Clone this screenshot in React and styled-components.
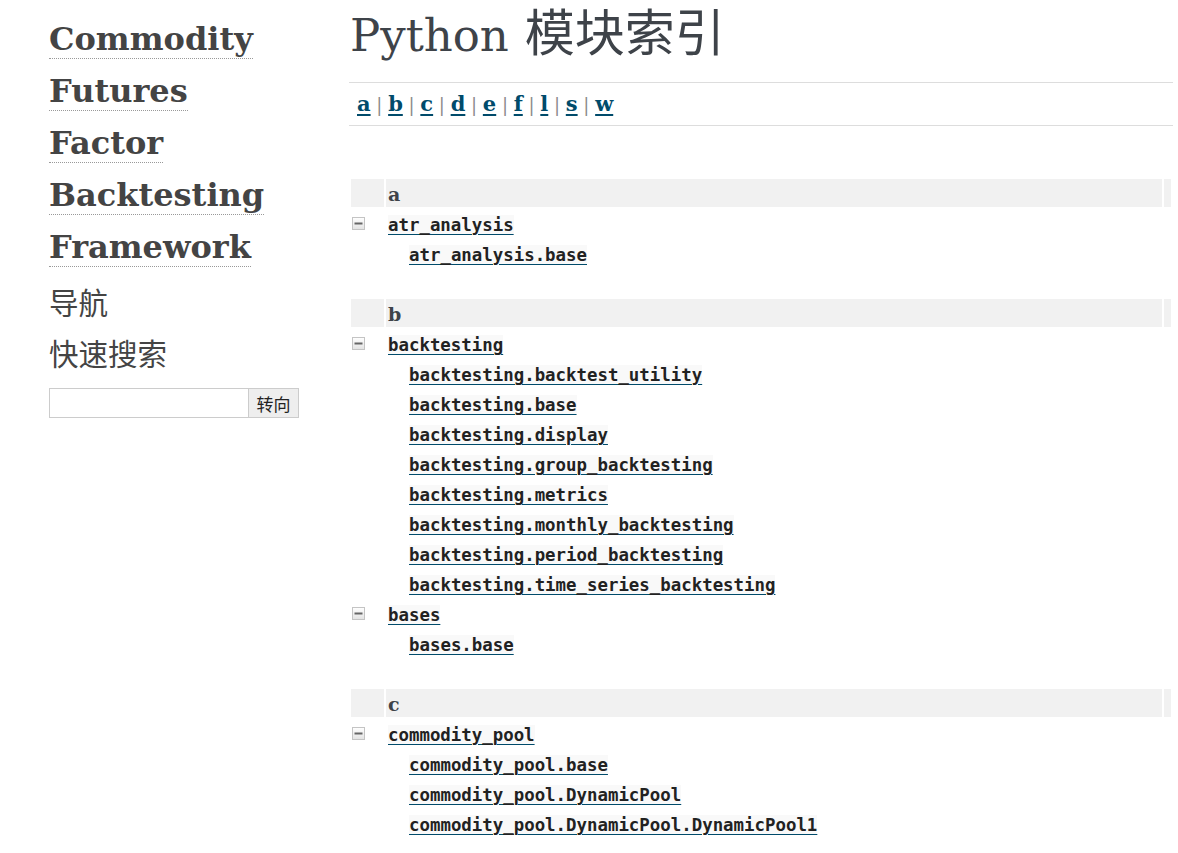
import styled, { createGlobalStyle } from "styled-components";

const GlobalStyle = createGlobalStyle`
  body {
    margin: 0;
    background: #fff;
    color: #3e4349;
    font-family: "DejaVu Serif", "Noto Sans CJK SC", serif;
  }
`;

const groups = [
  {
    letter: "a",
    items: [
      { name: "atr_analysis", top: true },
      { name: "atr_analysis.base" },
    ],
  },
  {
    letter: "b",
    items: [
      { name: "backtesting", top: true },
      { name: "backtesting.backtest_utility" },
      { name: "backtesting.base" },
      { name: "backtesting.display" },
      { name: "backtesting.group_backtesting" },
      { name: "backtesting.metrics" },
      { name: "backtesting.monthly_backtesting" },
      { name: "backtesting.period_backtesting" },
      { name: "backtesting.time_series_backtesting" },
      { name: "bases", top: true },
      { name: "bases.base" },
    ],
  },
  {
    letter: "c",
    items: [
      { name: "commodity_pool", top: true },
      { name: "commodity_pool.base" },
      { name: "commodity_pool.DynamicPool" },
      { name: "commodity_pool.DynamicPool.DynamicPool1" },
    ],
  },
];

const letters = ["a", "b", "c", "d", "e", "f", "l", "s", "w"];

const Minus = () => (
  <svg width="13" height="13" viewBox="0 0 13 13">
    <defs>
      <linearGradient id="mg" x1="0" y1="0" x2="0" y2="1">
        <stop offset="0" stopColor="#ffffff" />
        <stop offset="1" stopColor="#e2e2e2" />
      </linearGradient>
    </defs>
    <rect x="0.5" y="0.5" width="12" height="12" fill="url(#mg)" stroke="#c4c4c4" />
    <rect x="2.5" y="5.5" width="8" height="2" fill="#666" />
  </svg>
);

const App = () => {
  return (
    <>
      <GlobalStyle />
      <Page>
        <Sidebar>
          <Logo>
            <LogoLink href="#">Commodity Futures Factor Backtesting Framework</LogoLink>
          </Logo>
          <SideTitle>导航</SideTitle>
          <SideTitle $gap>快速搜索</SideTitle>
          <SearchForm>
            <SearchInput type="text" />
            <SearchButton type="button">转向</SearchButton>
          </SearchForm>
        </Sidebar>
        <Main>
          <Title>
            <TitleLatin>Python</TitleLatin> 模块索引
          </Title>
          <JumpBox>
            {letters.map((l, i) => (
              <span key={l}>
                {i > 0 && <Sep> | </Sep>}
                <JumpLink href="#">{l}</JumpLink>
              </span>
            ))}
          </JumpBox>
          <IndexTable>
            {groups.map((g) => (
              <Group key={g.letter}>
                <Row>
                  <Cell />
                  <Cell />
                  <Cell />
                </Row>
                <Row>
                  <Cell $cap />
                  <Cell $cap>
                    <CapLetter>{g.letter}</CapLetter>
                  </Cell>
                  <Cell $cap />
                </Row>
                {g.items.map((m) => (
                  <Row key={m.name}>
                    <IconCell>{m.top && <Minus />}</IconCell>
                    <Cell $sub={!m.top} $mod>
                      <ModLink href="#">
                        <Code>{m.name}</Code>
                      </ModLink>
                    </Cell>
                    <Cell />
                  </Row>
                ))}
              </Group>
            ))}
          </IndexTable>
        </Main>
      </Page>
    </>
  );
};

const Page = styled.div`
  display: flex;
  padding-left: 49px;
`;
const Sidebar = styled.div`
  width: 250px;
  flex-shrink: 0;
  margin-right: 50px;
  padding-top: 13px;
`;
const Logo = styled.h1`
  margin: 0;
  font-family: "DejaVu Serif", serif;
  font-weight: bold;
  font-size: 32px;
  line-height: 52px;
  color: #444;
`;
const LogoLink = styled.a`
  color: #444;
  text-decoration: none;
  border-bottom: 1px dotted #999;
`;
const SideTitle = styled.h3`
  margin: ${(p) => (p.$gap ? "14px" : "10px")} 0 0;
  font-family: "Noto Sans CJK SC", sans-serif;
  font-weight: normal;
  font-size: 29.5px;
  line-height: 37px;
  color: #444;
`;
const SearchForm = styled.div`
  display: flex;
  margin-top: 17px;
  height: 30px;
`;
const SearchInput = styled.input`
  width: 199px;
  box-sizing: border-box;
  height: 30px;
  border: 1px solid #ccc;
  border-right: none;
  margin: 0;
  padding: 0 4px;
  outline: none;
`;
const SearchButton = styled.button`
  width: 51px;
  height: 30px;
  box-sizing: border-box;
  margin: 0;
  border: 1px solid #ccc;
  background: #eee;
  font-family: "Noto Sans CJK SC", sans-serif;
  font-size: 17px;
  color: #222;
  padding: 0;
`;
const Main = styled.div`
  width: 824px;
  flex-shrink: 0;
`;
const Title = styled.h1`
  margin: 0;
  padding-top: 4px;
  font-family: "DejaVu Serif", "Noto Sans CJK SC", serif;
  font-weight: normal;
  font-size: 50px;
  line-height: 60px;
  height: 64px;
  padding-left: 1px;
  color: #3e4349;
  margin-bottom: 14px;
`;
const TitleLatin = styled.span`
  font-size: 45px;
`;
const JumpBox = styled.div`
  border-top: 1px solid #ddd;
  border-bottom: 1px solid #ddd;
  padding: 8px 8px;
  font-family: "DejaVu Serif", serif;
  font-size: 21px;
  line-height: 25px;
`;
const Sep = styled.span`
  color: #8a8a8a;
  font-weight: normal;
  font-size: 18px;
`;
const JumpLink = styled.a`
  color: #004b6b;
  font-weight: bold;
  text-decoration: underline;
  text-underline-offset: 3px;
  text-decoration-thickness: 2px;
`;
const IndexTable = styled.div`
  margin-top: 21px;
  padding: 0 2px 2px;
  display: flex;
  flex-direction: column;
`;
const Group = styled.div`
  display: flex;
  flex-direction: column;
`;
const Row = styled.div`
  display: grid;
  grid-template-columns: 33px 1fr 7px;
  column-gap: 2px;
  height: 28px;
  margin-top: 2px;
`;
const Cell = styled.div`
  background: ${(p) => (p.$cap ? "#f1f1f1" : "transparent")};
  display: flex;
  align-items: center;
  padding-left: ${(p) => (p.$sub ? "23px" : "2px")};
  padding-top: ${(p) => (p.$mod ? "3px" : "1px")};
  box-sizing: border-box;
  min-width: 0;
`;
const IconCell = styled.div`
  display: flex;
  align-items: center;
  padding-left: 1px;
  padding-top: 1px;
`;
const CapLetter = styled.strong`
  font-family: "DejaVu Serif", serif;
  font-size: 19px;
  color: #3e4349;
`;
const ModLink = styled.a`
  color: #004b6b;
  text-decoration: underline;
  text-underline-offset: 3px;
  text-decoration-thickness: 1px;
`;
const Code = styled.code`
  font-family: "DejaVu Sans Mono", monospace;
  font-weight: bold;
  font-size: 17.4px;
  color: #222;
  background: #f9f9f9;
`;

export default App;
